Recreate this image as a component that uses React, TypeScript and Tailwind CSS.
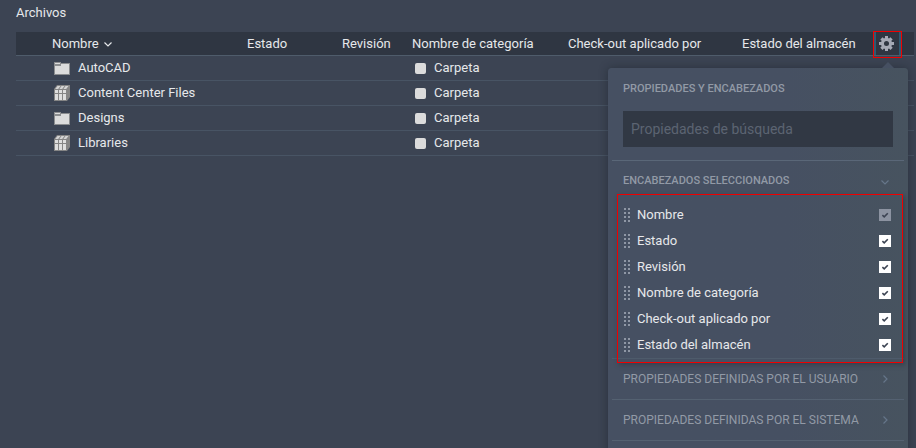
import { useState } from "react"

const files = [
  { name: "AutoCAD", kind: "folder" },
  { name: "Content Center Files", kind: "library" },
  { name: "Designs", kind: "folder" },
  { name: "Libraries", kind: "library" },
]

const headings = ["Nombre", "Estado", "Revisión", "Nombre de categoría", "Check-out aplicado por", "Estado del almacén"]

function FolderIcon() {
  return (
    <svg width="16" height="16" viewBox="0 0 16 16" className="shrink-0" shapeRendering="crispEdges">
      <path d="M0 2h7v1h9v12H0z" fill="#8b8d8f" />
      <path d="M1 3h5v1H1zM1 6h6V4h8v10H1z" fill="#dcdcdc" />
    </svg>
  )
}

function LibraryIcon() {
  return (
    <svg width="16" height="16" viewBox="0 0 16 16" className="shrink-0">
      <path d="M3 0h13v12l-3 4H0V4z" fill="#858585" />
      <path d="M3.5 1h3L4.2 4H1.2zM7.5 1h3L8.2 4H5.4zM11.5 1h3l-2.3 3H9.4z" fill="#d4d4d4" />
      <path d="M1 5h3v3H1zM5 5h3v3H5zM9 5h3v3H9zM1 9h3v6H1zM5 9h3v6H5zM9 9h3v6H9z" fill="#dedede" />
    </svg>
  )
}

function Gear() {
  return (
    <svg width="15" height="15" viewBox="0 0 16 16" fill="#a5a9b5">
      <path
        fillRule="evenodd"
        d="M6.4 0h3.2v2.1l1.1.5 1.5-1.4 2.4 2.4-1.4 1.5.5 1.3H16v3.2h-2.3l-.5 1.3 1.4 1.5-2.4 2.4-1.5-1.4-1.1.5V16H6.4v-2.1l-1.1-.5-1.5 1.4-2.4-2.4 1.4-1.5-.5-1.3H0V6.4h2.3l.5-1.3-1.4-1.5 2.4-2.4 1.5 1.4 1.1-.5zM8 5.3a2.7 2.7 0 1 0 0 5.4 2.7 2.7 0 0 0 0-5.4z"
      />
    </svg>
  )
}

function Chevron({ dir }: { dir: "down" | "right" }) {
  return (
    <svg width="10" height="10" viewBox="0 0 10 10" fill="none" stroke="currentColor" strokeWidth="1.2">
      <path d={dir === "down" ? "M1.5 3.5 5 7l3.5-3.5" : "M3.5 1.5 7 5 3.5 8.5"} />
    </svg>
  )
}

function Grip() {
  return (
    <svg width="6" height="14" viewBox="0 0 6 14" fill="#8f97a5" shapeRendering="crispEdges">
      {[0, 4, 8, 12].map((y) => (
        <path key={y} d={`M0 ${y}h2v2h-2zM4 ${y}h2v2h-2z`} />
      ))}
    </svg>
  )
}

function HeadingRow({ label, disabled }: { label: string; disabled: boolean }) {
  const [checked, setChecked] = useState(true)

  return (
    <li>
      <label className="flex h-[26px] items-center gap-[7px] pr-[17px] pl-4">
        <Grip />
        <span className="flex-1">{label}</span>
        <span className="relative flex h-3 w-3">
          <input
            type="checkbox"
            checked={checked}
            disabled={disabled}
            onChange={(e) => setChecked(e.target.checked)}
            className="h-3 w-3 appearance-none bg-white disabled:bg-[#8c93a1]"
          />
          {checked && (
            <svg viewBox="0 0 12 12" className="pointer-events-none absolute inset-0" fill="none" stroke="#3b4352" strokeWidth="1.6">
              <path d="M3.4 6.2 5.2 7.8 8.8 4.2" />
            </svg>
          )}
        </span>
      </label>
    </li>
  )
}

function SectionButton({ label, open }: { label: string; open?: boolean }) {
  return (
    <button
      type="button"
      aria-expanded={!!open}
      className={
        "flex w-full items-center justify-between pr-3.5 pl-[11px] text-[#929aa6] " +
        (open ? "h-[41px] text-[11px] font-medium" : "h-10 text-xs font-normal")
      }
    >
      {label}
      <span className="text-[#66768a]">
        <Chevron dir={open ? "down" : "right"} />
      </span>
    </button>
  )
}

function PropertiesPanel() {
  return (
    <div className="absolute top-9 -right-1.5 w-[300px] rounded bg-linear-to-r from-[#465062] from-60% to-[#47535f] pb-10 text-left shadow-[0_0_10px_rgba(20,26,36,0.45)]">
      <div className="absolute -top-1.5 right-[14px] h-1.5 w-3 bg-[#465062] [clip-path:polygon(50%_0,100%_100%,0_100%)]" />
      <div className="px-[15px] pb-[13px]">
        <h2 className="flex h-[43px] items-center text-[11px] font-medium text-[#929aa6]">PROPIEDADES Y ENCABEZADOS</h2>
        <input
          type="text"
          aria-label="Propiedades de búsqueda"
          placeholder="Propiedades de búsqueda"
          className="block h-9 w-full bg-[#313844] px-2 text-sm text-gray-200 outline-none placeholder:text-[#5c6472]"
        />
      </div>
      <div className="mx-1 border-t border-[#5a6778]">
        <SectionButton label="ENCABEZADOS SELECCIONADOS" open />
      </div>
      <div className="relative">
        <ul className="text-[13px] text-[#e6e8eb]">
          {headings.map((h, i) => (
            <HeadingRow key={h} label={h} disabled={i === 0} />
          ))}
        </ul>
        <div className="pointer-events-none absolute -top-2 right-[5px] -bottom-[5px] left-[9px] border border-[#f00000] shadow-[2px_2px_5px_rgba(30,36,48,0.4)]" />
      </div>
      <div className="mx-1 border-t border-[#4e5b6b]">
        <SectionButton label="PROPIEDADES DEFINIDAS POR EL USUARIO" />
      </div>
      <div className="mx-1 border-y border-[#546171]">
        <SectionButton label="PROPIEDADES DEFINIDAS POR EL SISTEMA" />
      </div>
    </div>
  )
}

export default function App() {
  const [open, setOpen] = useState(true)

  return (
    <main className="h-screen overflow-hidden bg-[#3c4453] pr-0.5 pl-4 font-['Roboto','Noto_Sans',sans-serif] text-[13px] text-[#e6e8eb]">
      <h1 className="flex h-8 items-center pb-1.5">Archivos</h1>
      <table className="w-full table-fixed border-separate border-spacing-0 text-left">
        <colgroup>
          <col />
          <col className="w-[95px]" />
          <col className="w-[70px]" />
          <col className="w-[156px]" />
          <col className="w-[174px]" />
          <col className="w-[131px]" />
          <col className="w-[41px]" />
        </colgroup>
        <thead className="bg-[#2f3642]">
          <tr className="h-6 whitespace-nowrap *:border-b *:border-[#4f5c6b]">
            {headings.map((h, i) => (
              <th key={h} scope="col" className="p-0 font-normal first:pl-9">
                {i === 0 ? (
                  <button type="button" className="flex items-center gap-1">
                    {h}
                    <Chevron dir="down" />
                  </button>
                ) : (
                  h
                )}
              </th>
            ))}
            <th className="p-0 font-normal">
              <div className="relative h-[23px] w-[29px] px-px">
                <button
                  type="button"
                  aria-label="Propiedades y encabezados"
                  aria-expanded={open}
                  onClick={() => setOpen(!open)}
                  className="flex h-full w-full items-center justify-center border-x-2 border-[#2e5a72] pr-0.5"
                >
                  <Gear />
                </button>
                {open && <PropertiesPanel />}
                <div className="pointer-events-none absolute inset-x-0 -top-px -bottom-[3px] border border-[#f00000]" />
              </div>
            </th>
          </tr>
        </thead>
        <tbody>
          {files.map((f) => (
            <tr key={f.name} className="h-[25px] *:border-b *:border-[#485464]">
              <td className="p-0 pl-[38px]">
                <div className="flex items-center gap-2">
                  {f.kind === "folder" ? <FolderIcon /> : <LibraryIcon />}
                  {f.name}
                </div>
              </td>
              <td />
              <td />
              <td className="p-0">
                <div className="flex items-center gap-2 pl-[3px]">
                  <span className="h-[11px] w-[11px] rounded-xs bg-[#dcdcdc]" />
                  Carpeta
                </div>
              </td>
              <td />
              <td />
              <td />
            </tr>
          ))}
        </tbody>
      </table>
    </main>
  )
}
